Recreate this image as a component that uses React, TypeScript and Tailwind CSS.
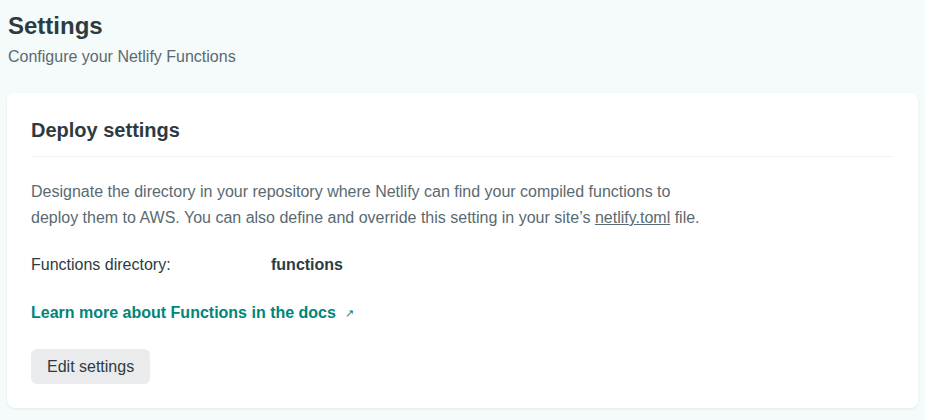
import React from 'react';

export default function App() {
  return (
    <div className="min-h-[420px] w-full bg-[#f5fafa] px-[7px] pt-[10px] pb-[10px] text-[#2d3b41]" style={{ fontFamily: '"Liberation Sans", Arial, sans-serif' }}>
      {/* Page header */}
      <h1 className="pl-px text-[24px] font-bold leading-[32px] text-[#2d3b41]">Settings</h1>
      <p className="mt-[5px] pl-px text-[16px] leading-[20px] text-[#5a6a70]">Configure your Netlify Functions</p>

      {/* Card */}
      <div className="mt-[26px] rounded-lg bg-white px-6 pt-[21px] pb-[24px] shadow-[0_1px_3px_rgba(14,30,37,0.08)]">
        <h2 className="text-[20px] font-bold leading-[32px] text-[#2d3b41]">Deploy settings</h2>
        <div className="mt-[10px] h-px bg-[#f1f3f4]" />

        <p className="mt-[22px] max-w-[680px] text-[16px] leading-[26px] text-[#5a6a70]">
          Designate the directory in your repository where Netlify can find your compiled functions to deploy them to AWS. You can also define and override this setting in your site’s{' '}
          <a href="#" className="underline">netlify.toml</a> file.
        </p>

        <div className="mt-[22px] flex text-[16px] leading-[24px]">
          <span className="w-[240px] text-[#2d3b41]">Functions directory:</span>
          <span className="font-bold text-[#2d3b41]">functions</span>
        </div>

        <a href="#" className="mt-[24px] flex items-center text-[16px] font-bold leading-[24px] text-[#00857a]">
          Learn more about Functions in the docs
          <span className="ml-[9px] text-[11px] font-normal">↗</span>
        </a>

        <button className="mt-[24px] rounded-md bg-[#e9ebed] px-4 py-[7px] text-[16px] leading-[21px] text-[#2d3b41]">Edit settings</button>
      </div>
    </div>
  );
}
